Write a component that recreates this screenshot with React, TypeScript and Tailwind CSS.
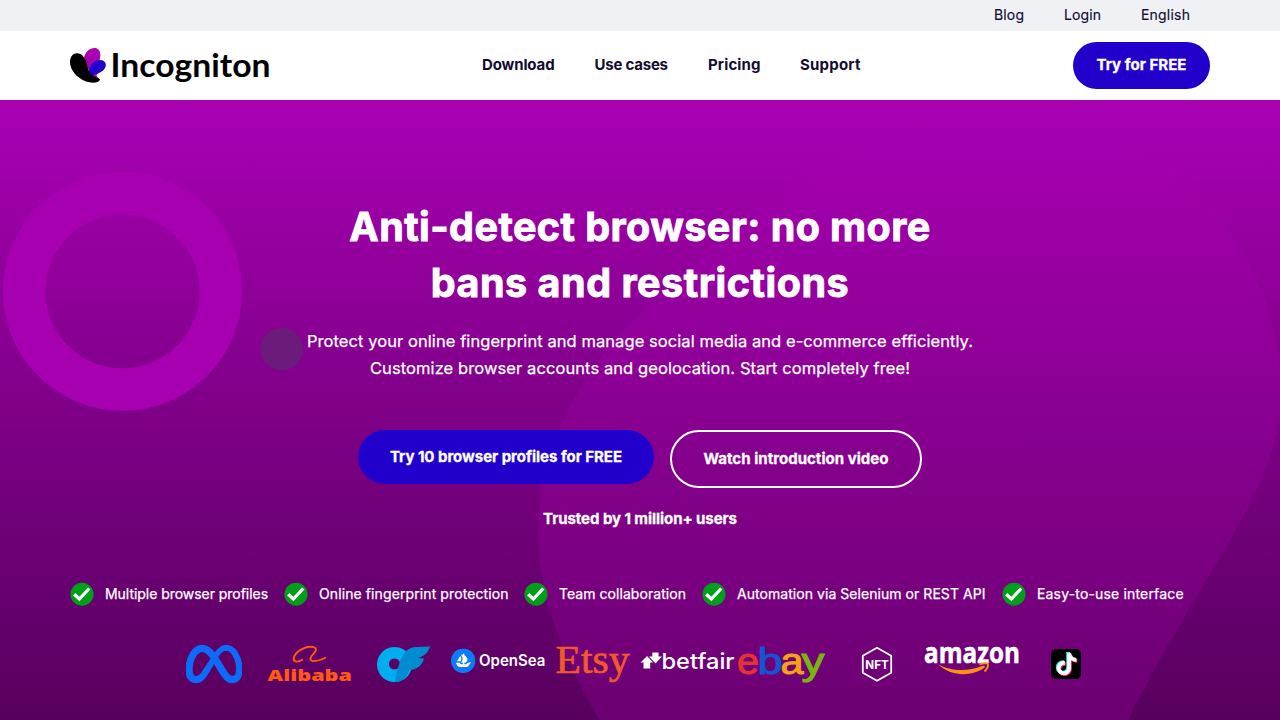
import { SiMeta, SiOpensea } from "react-icons/si";
import { FaTiktok } from "react-icons/fa6";

function Butterfly() {
  return (
    <svg width="200" height="40" viewBox="70 46 200 40" className="block overflow-visible">
      <path d="M84 58 C85 51 92 46.500 97 48.500 C102 51 100.500 59 98 64 L91 76 Z" fill="#a900b4" />
      <path d="M89 75 C87.500 64 97 58 103 60.500 C108 63 106 70 100 72.500 C97 74 95 75 96 77.500 Z" fill="#2200cc" />
      <path d="M95.500 73.500 L98 78 L92 77 Z" fill="#a900b4" />
      <path d="M70 62 C70 53 78 51 83 56 C88 62 87 68 90 73 C92 77 99 77 100 79.500 C99 83 92 83.500 86 81.500 C77 78 70 70 70 62 Z" fill="#000" />
      <text x="110.500" y="76.500" fontFamily="Lato" fontWeight="700" fontSize="31.500" textLength="160" lengthAdjust="spacingAndGlyphs">Incogniton</text>
    </svg>
  );
}

function Check() {
  return (
    <svg width="24" height="24" viewBox="0 0 24 24" className="block shrink-0">
      <circle cx="12" cy="12.200" r="11.500" fill="#009f1a" />
      <path d="M4.200 12.200 L9.400 17 L19.200 6.500" fill="none" stroke="#fff" strokeWidth="3.200" />
    </svg>
  );
}

function Logos() {
  return (
    <div className="mt-[38px] flex h-10 items-start pl-[116px]">
      <SiMeta size={56} className="-mt-2 shrink-0 text-[#0c6bf8]" stroke="#0c6bf8" strokeWidth="0.500" />
      <svg width="84" height="40" viewBox="268 644 84 40" className="ml-[26px] block shrink-0 overflow-visible">
        <path d="M303 659.500 C296 663.500 292.500 661.500 294 657 C297 650 307 645.500 313.500 647.200 C319 649 314 653 311.500 656 C308 661.500 313 663.500 326 657.500" fill="none" stroke="#ff5a14" strokeWidth="1.900" />
        <text x="267.500" y="681" fontFamily="Open Sans" fontWeight="800" fontSize="16.500" fill="#ff5a14" textLength="84.500" lengthAdjust="spacingAndGlyphs">Alibaba</text>
      </svg>
      <svg width="54" height="40" viewBox="377 644 54 40" className="ml-[25px] block shrink-0">
        <path fillRule="evenodd" d="M394.500 647 a17.500 17.500 0 1 0 .01 0 Z M394.500 658.500 a5.500 5.500 0 1 1 -.01 0 Z" fill="#00aeef" />
        <path d="M395 682 C398 668 401 647 416 647 L430 646.500 C428 653 424 656 418 658 L424 658.500 C422 666 416 670 409 670 C407 678 402 682 395 682 Z" fill="#008ccf" />
      </svg>
      <svg width="96" height="40" viewBox="450 644 96 40" className="ml-[19px] block shrink-0 overflow-visible">
        <circle cx="463.300" cy="660.600" r="8" fill="#fff" />
        <SiOpensea x="451" y="648.500" size={24.5} color="#0b7bf7" />
        <text x="479" y="666.300" fontFamily="Inter" fontWeight="600" fontSize="15.500" fill="#fff" textLength="66.500" lengthAdjust="spacingAndGlyphs">OpenSea</text>
      </svg>
      <svg width="75" height="40" viewBox="556 644 75 40" className="ml-[10px] block shrink-0 overflow-visible">
        <text x="555.500" y="673" fontFamily="Liberation Serif" fontSize="40" fill="#f1592a" stroke="#f1592a" strokeWidth="0.700" textLength="74" lengthAdjust="spacingAndGlyphs">Etsy</text>
      </svg>
      <svg width="95" height="40" viewBox="640 644 95 40" className="ml-[9px] block shrink-0 overflow-visible">
        <path d="M640.500 662.500 L647 656 L653 662.500 L650.200 662.500 L650.200 668.500 L643.500 668.500 L643.500 662.500 Z M649 656.500 L652.300 656.500 L652.300 652.500 L658.500 652.500 L658.500 656.500 L662 656.500 L655.500 663.500 Z" fill="#fff" />
        <text x="661.500" y="668.500" fontFamily="Inter" fontWeight="500" fontSize="21.500" fill="#fff" textLength="73" lengthAdjust="spacingAndGlyphs">betfair</text>
      </svg>
      <svg width="89" height="40" viewBox="737 644 89 40" className="ml-[2px] block shrink-0 overflow-visible">
        <g fontFamily="Liberation Sans" fontSize="37" strokeWidth="1">
          <text x="737" y="673.500" fill="#e53238" stroke="#e53238" textLength="22" lengthAdjust="spacingAndGlyphs">e</text>
          <text x="757.500" y="673.500" fill="#1455d0" stroke="#1455d0" textLength="25" lengthAdjust="spacingAndGlyphs">b</text>
          <text x="780.500" y="673.500" fill="#f5a214" stroke="#f5a214" textLength="23" lengthAdjust="spacingAndGlyphs">a</text>
          <text x="801.500" y="673.500" fill="#7ab50e" stroke="#7ab50e" textLength="23" lengthAdjust="spacingAndGlyphs">y</text>
        </g>
      </svg>
      <svg width="32" height="40" viewBox="861 644 32 40" className="ml-[35px] block shrink-0">
        <path d="M877 647.800 L891.200 655.700 V672.800 L877 680.800 L862.800 672.800 V655.700 Z" fill="none" stroke="#fff" strokeWidth="1.800" />
        <text x="865.300" y="668.800" fontFamily="Inter" fontWeight="700" fontSize="12" fill="#fff" textLength="23.500" lengthAdjust="spacingAndGlyphs">NFT</text>
      </svg>
      <svg width="98" height="40" viewBox="923 644 98 40" className="ml-[30px] block shrink-0 overflow-visible">
        <text x="924" y="662.500" fontFamily="Open Sans" fontWeight="700" fontSize="28" fill="#fff" stroke="#fff" strokeWidth="0.500" textLength="96" lengthAdjust="spacingAndGlyphs">amazon</text>
        <path d="M938 664 C950 671.500 968 672 982 666 C985 665 986 666.500 984 668 C971 677 950 676.500 938 664 Z" fill="#ff9016" />
        <path d="M979.500 664.500 C983 663 987.500 663 987.800 664 C988.300 666 987 669 984.500 671.500" fill="none" stroke="#ff9016" strokeWidth="1.900" />
      </svg>
      <span className="mt-[5px] ml-[30px] flex h-[30px] w-[30px] shrink-0 items-center justify-center rounded-[5px] bg-black">
        <svg width="30" height="30" viewBox="0 0 30 30" className="block">
          <FaTiktok x="3.400" y="3" size={22.5} color="#25f4ee" />
          <FaTiktok x="5.200" y="4.600" size={22.5} color="#fe2c55" />
          <FaTiktok x="4.300" y="3.800" size={22.5} color="#fff" />
        </svg>
      </span>
    </div>
  );
}

function Backdrop() {
  return (
    <svg width="1280" height="620" viewBox="0 100 1280 620" className="absolute top-0 left-0" aria-hidden="true">
      <defs>
        <linearGradient id="blob" gradientUnits="userSpaceOnUse" x1="0" y1="100" x2="0" y2="720">
          <stop offset="0" stopColor="#a900b4" />
          <stop offset="0.150" stopColor="#9f00a9" />
          <stop offset="1" stopColor="#6b0071" />
        </linearGradient>
      </defs>
      <path
        d="M600 720 C560 655 538 590 538 530 C540 430 595 352 665 290 C735 230 790 185 835 159 C950 95 1110 110 1194 191 C1250 245 1281 320 1281 390 C1281 450 1255 495 1230 540 C1195 600 1157 660 1128 720 Z"
        fill="url(#blob)"
      />
      <circle cx="122.500" cy="291.300" r="98.300" fill="none" stroke="#a600b1" strokeWidth="42.500" />
      <circle cx="281.800" cy="349" r="21.300" fill="#6c1a7c" />
    </svg>
  );
}

function Feature({ width, children }: { width: string; children: string }) {
  return (
    <li className="flex items-center gap-[11px]">
      <Check />
      <span className={"pb-[2px] whitespace-nowrap " + width}>{children}</span>
    </li>
  );
}

export default function App() {
  return (
    <div className="flex h-[720px] w-[1280px] flex-col overflow-hidden bg-white font-['Inter',sans-serif] text-[#120c30]">
      <div className="flex h-[31px] shrink-0 items-center justify-end gap-10 bg-[#eff1f5] pr-[90px] pb-[2px] text-[14px] [-webkit-text-stroke:0.15px]">
        <a className="w-[30px] tracking-[0.15px] whitespace-nowrap">Blog</a>
        <a className="w-[37px] tracking-[0.1px] whitespace-nowrap">Login</a>
        <a className="w-[49px] tracking-[0.2px] whitespace-nowrap">English</a>
      </div>
      <header className="flex h-[69px] shrink-0 items-center px-[70px] text-[15px] font-bold">
        <Butterfly />
        <nav className="ml-[212px] flex gap-10">
          <a className="w-[72.5px] tracking-[-0.13px] whitespace-nowrap">Download</a>
          <a className="w-[73.5px] tracking-[-0.22px] whitespace-nowrap">Use cases</a>
          <a className="w-[52px] tracking-[0.13px] whitespace-nowrap">Pricing</a>
          <a className="w-[61px] tracking-[0.22px] whitespace-nowrap">Support</a>
        </nav>
        <a className="ml-auto flex h-[47px] w-[137px] items-center justify-center rounded-full bg-[#2200cc] tracking-[0.05px] whitespace-nowrap text-white [-webkit-text-stroke:0.3px]">
          Try for FREE
        </a>
      </header>
      <main className="relative h-[620px] bg-linear-to-b from-[#a900b4] to-[#57005e] text-white">
        <Backdrop />
        <div className="relative flex flex-col items-center pt-[99px]">
          <h1 className="text-center text-[39.5px] leading-[56px] font-bold whitespace-nowrap [-webkit-text-stroke:0.9px]">
            <span className="block tracking-[0.43px]">Anti-detect browser: no more</span>
            <span className="block tracking-[0.51px]">bans and restrictions</span>
          </h1>
          <p className="mt-[17px] text-center text-[16.5px] leading-[27px] whitespace-nowrap [-webkit-text-stroke:0.25px]">
            <span className="block tracking-[0.07px]">
              Protect your online fingerprint and manage social media and e-commerce efficiently.
            </span>
            <span className="block tracking-[0.086px]">
              Customize browser accounts and geolocation. Start completely free!
            </span>
          </p>
          <div className="mt-[48px] flex items-start gap-4 text-[15px] font-bold whitespace-nowrap [-webkit-text-stroke:0.3px]">
            <a className="flex h-[54px] w-[296px] items-center justify-center rounded-full bg-[#2200cc] tracking-[-0.03px]">
              Try 10 browser profiles for FREE
            </a>
            <a className="flex h-[58px] w-[252px] items-center justify-center rounded-full border-2 border-white tracking-[0.03px]">
              Watch introduction video
            </a>
          </div>
          <p className="mt-5 text-[15px] leading-[22px] font-bold tracking-[-0.06px] [-webkit-text-stroke:0.3px]">
            Trusted by 1 million+ users
          </p>
        </div>
        <div className="relative pl-[70px]">
          <ul className="mt-[52px] flex gap-[16px] text-[14px] [-webkit-text-stroke:0.25px]">
            <Feature width="w-[163px] tracking-[-0.04px]">Multiple browser profiles</Feature>
            <Feature width="w-[189px] tracking-[0.1px]">Online fingerprint protection</Feature>
            <Feature width="w-[127px] tracking-[0.05px]">Team collaboration</Feature>
            <Feature width="w-[249px] tracking-[0.05px]">Automation via Selenium or REST API</Feature>
            <Feature width="w-[148px] tracking-[0.17px]">Easy-to-use interface</Feature>
          </ul>
          <Logos />
        </div>
      </main>
    </div>
  );
}
